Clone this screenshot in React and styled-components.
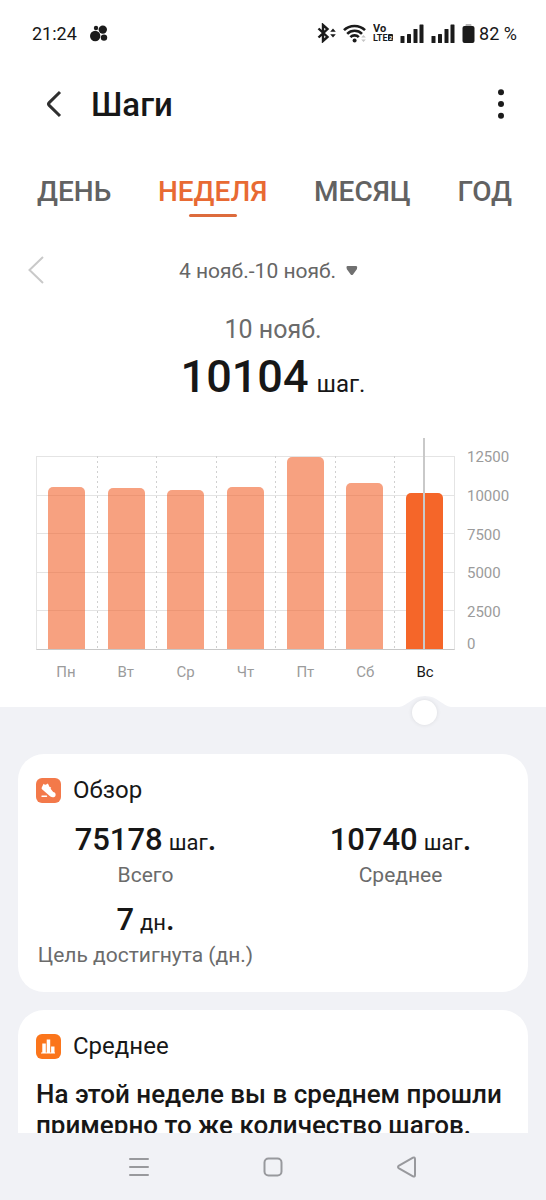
// Libs & Frameworks
import { useState } from "react";
import styled, { createGlobalStyle } from "styled-components";

// Data
const MAX_STEPS = 12500;

const ticks = [12500, 10000, 7500, 5000, 2500, 0];

const tabs = ["ДЕНЬ", "НЕДЕЛЯ", "МЕСЯЦ", "ГОД"];

const days = [
  { name: "Пн", steps: 10500 },
  { name: "Вт", steps: 10410 },
  { name: "Ср", steps: 10270 },
  { name: "Чт", steps: 10490 },
  { name: "Пт", steps: 12410 },
  { name: "Сб", steps: 10760 },
  { name: "Вс", steps: 10104 },
];

// Style
const GlobalStyle = createGlobalStyle`
  * {
    box-sizing: border-box;
  }

  body {
    margin: 0;
    background: #f1f2f6;
    color: #171717;
    font-family: Roboto, "Noto Sans", sans-serif;
  }

  button,
  select,
  input {
    margin: 0;
    padding: 0;
    border: none;
    background: none;
    color: inherit;
    font: inherit;
  }

  button {
    cursor: pointer;
  }

  svg {
    display: block;
    flex: none;
  }

  h1,
  h2,
  p,
  dl,
  dd {
    margin: 0;
    font-weight: 400;
  }
`;

const Screen = styled.div`
  display: flex;
  flex-direction: column;
  height: 100vh;
`;

const Content = styled.main`
  flex: 1;
  min-height: 0;
  overflow: hidden;
`;

const Top = styled.section`
  background: #fff;
`;

const StatusBar = styled.div`
  display: flex;
  align-items: center;
  justify-content: space-between;
  height: 66px;
  padding: 0 29px 0 32px;
  font-size: 18px;
`;

const StatusGroup = styled.div`
  display: flex;
  align-items: center;
  gap: ${({ $gap }) => $gap}px;
`;

const Battery = styled.span`
  display: flex;
  align-items: center;
  gap: 4px;
`;

const Header = styled.header`
  display: flex;
  align-items: center;
  height: 76px;
  padding: 0 34px 0 43px;
`;

const IconButton = styled.button`
  display: flex;
  align-items: center;
  justify-content: center;
  width: ${({ $size }) => $size}px;
  height: 48px;
`;

const Title = styled.h1`
  flex: 1;
  margin-left: 26px;
  font-size: 33px;
  font-weight: 500;
`;

const Tabs = styled.nav`
  display: flex;
  justify-content: space-between;
  margin-top: 28px;
  padding: 0 34px 0 37px;
`;

const Tab = styled.button`
  display: flex;
  flex-direction: column;
  align-items: center;
  gap: 1px;
  height: 50px;
  font-size: 28px;
  font-weight: 500;
  line-height: 43px;
  color: ${({ $active }) => ($active ? "#e86a33" : "#626262")};

  &::after {
    content: "";
    width: 48px;
    height: 3px;
    border-radius: 2px;
    background: ${({ $active }) => ($active ? "#dd6b3c" : "transparent")};
  }
`;

const Period = styled.div`
  display: grid;
  grid-template-columns: 48px 1fr 48px;
  align-items: center;
  margin-top: 26px;
  padding: 0 12px;
`;

const PeriodPicker = styled.label`
  display: flex;
  align-items: center;
  justify-content: center;
  gap: 9px;
  margin-right: 9px;
  padding-top: 2px;
  color: #666;
`;

const PeriodSelect = styled.select`
  appearance: none;
  font-size: 21px;
`;

const Summary = styled.div`
  display: flex;
  flex-direction: column;
  align-items: center;
  margin-top: 21px;
`;

const SummaryDate = styled.p`
  font-size: 25px;
  line-height: 30px;
  color: #6b6b6b;
`;

const SummarySteps = styled.p`
  font-size: 24px;
  line-height: 64px;

  strong {
    margin-right: 8px;
    font-size: 45px;
    font-weight: 500;
  }
`;

const Chart = styled.div`
  display: grid;
  grid-template-columns: 1fr 91px;
  margin-top: 40px;
  padding-left: 36px;
`;

const Plot = styled.div`
  display: grid;
  height: 194px;
  border: 1px solid #e4e4e4;
  border-top: none;
  border-bottom-color: #c8c8c8;
`;

const GridLines = styled.div`
  grid-area: 1 / 1;
  display: grid;
  grid-template-rows: repeat(5, 1fr);

  span {
    border-top: 1px solid #e4e4e4;
  }
`;

const Columns = styled.div`
  grid-area: 1 / 1;
  display: grid;
  grid-template-columns: repeat(7, 1fr);
`;

const Column = styled.button`
  position: relative;
  display: flex;
  align-items: flex-end;
  justify-content: center;
  height: 100%;

  &:not(:first-child) {
    background: repeating-linear-gradient(#d0d0d0 0 2px, transparent 2px 5px)
      left / 1px 100% no-repeat;
  }
`;

const Bar = styled.span`
  width: 62%;
  border-radius: 5px 5px 0 0;
  background: ${({ $active }) => ($active ? "#f56629" : "#f2622a98")};
`;

const Cursor = styled.span`
  position: absolute;
  top: -18px;
  bottom: 0;
  width: 2px;
  background: #c9c9c9;
`;

const Axis = styled.div`
  display: grid;
  grid-template-rows: repeat(5, 1fr) 0;
  height: 194px;
  padding-left: 12px;
  font-size: 15px;
  line-height: 18px;
  color: #9b9b9b;
`;

const Tick = styled.span`
  height: 18px;
  margin-top: -8px;

  &:last-child {
    margin-top: -15px;
  }
`;

const DayNames = styled.div`
  display: grid;
  grid-template-columns: repeat(7, 1fr);
  margin: 13px 91px 0 36px;
  padding-bottom: 26px;
  font-size: 15px;
  line-height: 18px;
  text-align: center;
`;

const DayName = styled.span`
  color: ${({ $active }) => ($active ? "#171717" : "#9b9b9b")};
`;

const SliderRow = styled.div`
  display: grid;
  grid-template-columns: repeat(7, 1fr);
  height: 47px;
  margin: 0 91px 0 36px;
`;

const Bump = styled.svg`
  grid-row: 1;
  justify-self: center;
  margin-top: -11px;
`;

const Slider = styled.input`
  grid-area: 1 / 1 / 2 / 8;
  appearance: none;
  z-index: 1;
  height: 26px;
  margin: -8px 18px 0;

  &::-webkit-slider-thumb {
    appearance: none;
    width: 25px;
    height: 25px;
    border-radius: 50%;
    background: #fff;
    box-shadow: 0 0 4px #00000018;
  }
`;

const Cards = styled.div`
  display: flex;
  flex-direction: column;
  gap: 18px;
  padding: 0 18px;
`;

const Card = styled.section`
  padding: 18px 18px 22px;
  border-radius: 26px;
  background: #fff;
`;

const CardHead = styled.div`
  display: flex;
  align-items: center;
  gap: 12px;
  height: 36px;

  h2 {
    font-size: 24px;
  }
`;

const Stats = styled.dl`
  display: grid;
  grid-template-columns: 1fr 1fr;
  gap: 10px 36px;
  margin-top: 12px;
`;

const Stat = styled.div`
  display: flex;
  flex-direction: column-reverse;
  align-items: center;
  white-space: nowrap;
`;

const StatLabel = styled.dt`
  font-size: 21px;
  line-height: 30px;
  color: #6b6b6b;
`;

const StatValue = styled.dd`
  font-size: 31px;
  font-weight: 500;
  line-height: 40px;

  small {
    margin-left: 6px;
    font-size: 22px;
    font-weight: 400;
    line-height: 1;
  }
`;

const Advice = styled.p`
  margin-top: 15px;
  font-size: 26px;
  font-weight: 500;
  line-height: 31px;
`;

const SystemNav = styled.nav`
  display: grid;
  grid-template-columns: repeat(3, 134px);
  justify-content: center;
  justify-items: center;
  align-items: center;
  height: 67px;
  color: #98999d;
`;

// Icons
const AppDots = () => (
  <svg width="18" height="17" viewBox="0 0 18 17" fill="#1b1b1b">
    <circle cx="5.2" cy="11" r="5.2" />
    <circle cx="12.8" cy="4.6" r="4.2" />
    <circle cx="14" cy="12.6" r="3.2" />
    <circle cx="6" cy="3" r="2.2" />
  </svg>
);

const BluetoothIcon = () => (
  <svg width="19" height="20" viewBox="0 0 19 20">
    <path
      d="M1.5 5.5 10.5 14 6 18V2l4.5 4L1.5 14.5"
      fill="none"
      stroke="#1b1b1b"
      strokeWidth="2.4"
    />
    <path d="m16 5.6 2.8 3.2h-5.6zM16 14.4l2.8-3.2h-5.6z" fill="#1b1b1b" />
  </svg>
);

const WifiIcon = () => (
  <svg width="23" height="19" viewBox="0 0 23 19">
    <g fill="none" stroke="#1b1b1b" strokeWidth="2.6">
      <path d="M1 6.2c5.5-5.6 15.5-5.6 21 0" />
      <path d="M4.2 9.8c4-4 10.8-4 14.8 0" />
      <path d="M7.4 13.2c2.4-2.4 6-2.4 8.4 0" />
    </g>
    <circle cx="11.6" cy="16.6" r="2" fill="#1b1b1b" />
    <path
      d="m20.5 11 2.3 2.6h-4.6zM20.5 18l2.3-2.6h-4.6z"
      fill="#c4c4c4"
    />
  </svg>
);

const VolteIcon = () => (
  <svg
    width="20"
    height="20"
    viewBox="0 0 20 20"
    fontFamily="Roboto, sans-serif"
    fontWeight="700"
    fill="#1b1b1b"
  >
    <text x="0" y="9" fontSize="11">
      Vo
    </text>
    <text x="0" y="18" fontSize="9">
      LTE
    </text>
    <rect x="15" y="11" width="5" height="7" rx="1" />
    <text x="16" y="17" fontSize="6" fill="#fff">
      2
    </text>
  </svg>
);

const SignalIcon = () => (
  <svg width="24" height="19" viewBox="0 0 24 19" fill="#1b1b1b">
    <rect x="0.5" y="12" width="4" height="7" rx="0.6" />
    <rect x="7" y="10" width="4" height="9" rx="0.6" />
    <rect x="13.5" y="5" width="4" height="14" rx="0.6" />
    <rect x="19.5" y="0.5" width="4" height="18.5" rx="0.6" />
  </svg>
);

const BatteryIcon = () => (
  <svg width="13" height="19" viewBox="0 0 13 19">
    <path d="M3.5 2V1a1 1 0 0 1 1-1h4a1 1 0 0 1 1 1v1z" fill="#b5b5b5" />
    <rect x="0.5" y="2" width="12" height="17" rx="2" fill="#1b1b1b" />
  </svg>
);

const BackIcon = () => (
  <svg width="16" height="28" viewBox="0 0 16 28">
    <path
      d="M14 2 3.2 12.6a2 2 0 0 0 0 2.8L14 26"
      fill="none"
      stroke="#2f2f2f"
      strokeWidth="3"
    />
  </svg>
);

const MoreIcon = () => (
  <svg width="6" height="30" viewBox="0 0 6 30" fill="#1b1b1b">
    <circle cx="3" cy="3.2" r="3" />
    <circle cx="3" cy="15" r="3" />
    <circle cx="3" cy="26.8" r="3" />
  </svg>
);

const PrevIcon = () => (
  <svg width="16" height="28" viewBox="0 0 16 28">
    <path
      d="M15 1 1.5 14 15 27"
      fill="none"
      stroke="#c9c9c9"
      strokeWidth="2"
    />
  </svg>
);

const CaretIcon = () => (
  <svg width="12" height="10" viewBox="0 0 12 10">
    <path
      d="M1.5 0h8.5a1.2 1.2 0 0 1 1 1.9v1L7 8.4a1.5 1.5 0 0 1-2.3 0L.7 2.9v-1A1.2 1.2 0 0 1 1.5 0z"
      fill="#707070"
    />
  </svg>
);

const ShoeIcon = () => (
  <svg width="25" height="25" viewBox="0 0 25 25">
    <rect width="25" height="25" rx="6" fill="#f3794a" />
    <path
      d="M7.6 5.8c1 1.2 2.2 1.2 3.4.3l.9-.6 1.7 3.4 1.6.6-.6 1.3 2.6 3.2c2.4.6 2.8 2.2 2.2 3.9-.6 1.5-3.4 1.5-5 .7L6 11.3c-.6-.7-.4-1.500 0-2.300z"
      fill="#fff"
    />
    <path
      d="M6 18.2h4.5"
      stroke="#fff"
      strokeWidth="1.4"
      strokeLinecap="round"
    />
  </svg>
);

const BarsIcon = () => (
  <svg width="25" height="25" viewBox="0 0 25 25">
    <rect width="25" height="25" rx="6" fill="#fb751b" />
    <path
      d="M5 19.5v-1h1.3v-9h3.5v9h.9v-13h3.5v13h.9v-6h3.4v6H19v1z"
      fill="#fff"
    />
  </svg>
);

const MenuIcon = () => (
  <svg width="20" height="20" viewBox="0 0 20 20">
    <path
      d="M1 2h18M1 10h18M1 18h18"
      stroke="currentColor"
      strokeWidth="2"
      strokeLinecap="round"
    />
  </svg>
);

const HomeIcon = () => (
  <svg width="20" height="20" viewBox="0 0 20 20">
    <rect
      x="1.5"
      y="1.5"
      width="17"
      height="17"
      rx="4"
      fill="none"
      stroke="currentColor"
      strokeWidth="2"
    />
  </svg>
);

const TriangleIcon = () => (
  <svg width="20" height="22" viewBox="0 0 20 22">
    <path
      d="M2 9.7 16 1.7Q18 .8 18 3v16q0 2.2-2 1.3L2 12.3q-2-1.3 0-2.6z"
      fill="none"
      stroke="currentColor"
      strokeWidth="2"
      strokeLinejoin="round"
    />
  </svg>
);

// JSX
const StepsChart = ({ selected, onSelect }) => {
  return (
    <>
      <Chart>
        <Plot>
          <GridLines>
            {ticks.slice(1).map((tick) => (
              <span key={tick} />
            ))}
          </GridLines>
          <Columns>
            {days.map(({ name, steps }, index) => (
              <Column
                key={name}
                aria-label={name}
                onClick={() => onSelect(index)}
              >
                <Bar
                  $active={index === selected}
                  style={{ height: `${(steps / MAX_STEPS) * 100}%` }}
                />
                {index === selected && <Cursor />}
              </Column>
            ))}
          </Columns>
        </Plot>
        <Axis>
          {ticks.map((tick) => (
            <Tick key={tick}>{tick}</Tick>
          ))}
        </Axis>
      </Chart>
      <DayNames>
        {days.map(({ name }, index) => (
          <DayName key={name} $active={index === selected}>
            {name}
          </DayName>
        ))}
      </DayNames>
    </>
  );
};

const StatItem = ({ value, unit, label }) => {
  return (
    <Stat>
      <StatLabel>{label}</StatLabel>
      <StatValue>
        {value}
        <small>{unit}</small>.
      </StatValue>
    </Stat>
  );
};

const App = () => {
  const [tab, setTab] = useState("НЕДЕЛЯ");
  const [selected, setSelected] = useState(6);

  return (
    <Screen>
      <GlobalStyle />
      <Content>
        <Top>
          <StatusBar>
            <StatusGroup $gap={13}>
              <span>21:24</span>
              <AppDots />
            </StatusGroup>
            <StatusGroup $gap={7}>
              <BluetoothIcon />
              <WifiIcon />
              <VolteIcon />
              <SignalIcon />
              <SignalIcon />
              <Battery>
                <BatteryIcon />
                82 %
              </Battery>
            </StatusGroup>
          </StatusBar>
          <Header>
            <IconButton $size={22} aria-label="Назад">
              <BackIcon />
            </IconButton>
            <Title>Шаги</Title>
            <IconButton $size={22} aria-label="Ещё">
              <MoreIcon />
            </IconButton>
          </Header>
          <Tabs>
            {tabs.map((name) => (
              <Tab
                key={name}
                $active={name === tab}
                onClick={() => setTab(name)}
              >
                {name}
              </Tab>
            ))}
          </Tabs>
          <Period>
            <IconButton $size={48} aria-label="Предыдущая неделя">
              <PrevIcon />
            </IconButton>
            <PeriodPicker>
              <PeriodSelect aria-label="Период">
                <option>4 нояб.-10 нояб.</option>
              </PeriodSelect>
              <CaretIcon />
            </PeriodPicker>
          </Period>
          <Summary>
            <SummaryDate>{selected + 4} нояб.</SummaryDate>
            <SummarySteps>
              <strong>{days[selected].steps}</strong>
              шаг.
            </SummarySteps>
          </Summary>
          <StepsChart selected={selected} onSelect={setSelected} />
        </Top>
        <SliderRow>
          <Bump
            width="60"
            height="30"
            viewBox="0 0 60 30"
            style={{ gridColumn: selected + 1 }}
          >
            <path
              d="M0 30V11h4C13 10 17 0 30 0s17 10 26 11h4v19z"
              fill="#f1f2f6"
            />
          </Bump>
          <Slider
            type="range"
            min="0"
            max="6"
            value={selected}
            aria-label="День недели"
            onChange={(e) => setSelected(Number(e.target.value))}
          />
        </SliderRow>
        <Cards>
          <Card>
            <CardHead>
              <ShoeIcon />
              <h2>Обзор</h2>
            </CardHead>
            <Stats>
              <StatItem value="75178" unit="шаг" label="Всего" />
              <StatItem value="10740" unit="шаг" label="Среднее" />
              <StatItem value="7" unit="дн" label="Цель достигнута (дн.)" />
            </Stats>
          </Card>
          <Card>
            <CardHead>
              <BarsIcon />
              <h2>Среднее</h2>
            </CardHead>
            <Advice>
              На этой неделе вы в среднем прошли примерно то же количество
              шагов.
            </Advice>
          </Card>
        </Cards>
      </Content>
      <SystemNav>
        <IconButton $size={48} aria-label="Недавние">
          <MenuIcon />
        </IconButton>
        <IconButton $size={48} aria-label="Домой">
          <HomeIcon />
        </IconButton>
        <IconButton $size={48} aria-label="Назад">
          <TriangleIcon />
        </IconButton>
      </SystemNav>
    </Screen>
  );
};

export default App;
